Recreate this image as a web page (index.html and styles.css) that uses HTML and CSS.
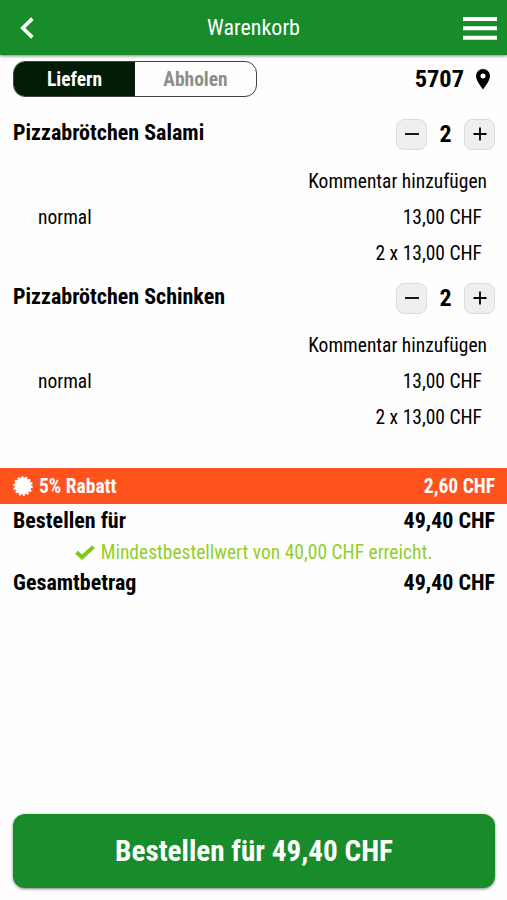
FILE: index.html
```html
<!DOCTYPE html>
<html lang="de">
<head>
  <meta charset="UTF-8">
  <meta name="viewport" content="width=device-width, initial-scale=1">
  <title>Warenkorb</title>
  <link rel="stylesheet" href="styles.css">
</head>
<body>
  <header class="header">
    <button class="icon-btn" aria-label="Zurück">
      <svg width="14" height="22" viewBox="0 0 14 22"><path d="M12.4 1.6 2.8 11l9.6 9.4" fill="none" stroke="#fff" stroke-width="3.7"/></svg>
    </button>
    <h1>Warenkorb</h1>
    <button class="icon-btn" aria-label="Menü">
      <svg width="34" height="23" viewBox="0 0 34 23"><path d="M0 2h34M0 11.3h34M0 20.7h34" stroke="#fff" stroke-width="4"/></svg>
    </button>
  </header>

  <main>
    <div class="delivery">
      <div class="switch">
        <button class="active">Liefern</button>
        <button>Abholen</button>
      </div>
      <div class="zip">
        <span>5707</span>
        <svg width="14" height="21" viewBox="0 0 14 21"><path fill="#000" fill-rule="evenodd" d="M7 0a7 7 0 0 1 7 7.1C14 12 7 20.5 7 20.5S0 12 0 7.1A7 7 0 0 1 7 0Zm0 4.6a2.5 2.5 0 1 0 0 5 2.5 2.5 0 0 0 0-5Z"/></svg>
      </div>
    </div>

    <section class="item">
      <div class="item-head">
        <h2>Pizzabrötchen Salami</h2>
        <div class="counter">
          <button aria-label="weniger"><svg width="14" height="14" viewBox="0 0 14 14"><path d="M0 7h14" stroke="#000" stroke-width="1.8"/></svg></button>
          <span>2</span>
          <button aria-label="mehr"><svg width="14" height="14" viewBox="0 0 14 14"><path d="M0.5 7h13M7 0.5v13" stroke="#000" stroke-width="1.8"/></svg></button>
        </div>
      </div>
      <div class="comment">Kommentar hinzufügen</div>
      <div class="line"><span>normal</span><span>13,00 CHF</span></div>
      <div class="line sum">2 x 13,00 CHF</div>
    </section>

    <section class="item">
      <div class="item-head">
        <h2>Pizzabrötchen Schinken</h2>
        <div class="counter">
          <button aria-label="weniger"><svg width="14" height="14" viewBox="0 0 14 14"><path d="M0 7h14" stroke="#000" stroke-width="1.8"/></svg></button>
          <span>2</span>
          <button aria-label="mehr"><svg width="14" height="14" viewBox="0 0 14 14"><path d="M0.5 7h13M7 0.5v13" stroke="#000" stroke-width="1.8"/></svg></button>
        </div>
      </div>
      <div class="comment">Kommentar hinzufügen</div>
      <div class="line"><span>normal</span><span>13,00 CHF</span></div>
      <div class="line sum">2 x 13,00 CHF</div>
    </section>

    <div class="discount">
      <svg width="20" height="20" viewBox="-10 -10 20 20"><circle r="8.4" fill="#fff"/><circle class="teeth" r="8.6"/></svg>
      <span>5% Rabatt</span>
      <span class="price">2,60 CHF</span>
    </div>

    <div class="total"><span>Bestellen für</span><span>49,40 CHF</span></div>
    <div class="minimum">
      <svg width="20" height="15" viewBox="0 0 20 15"><path d="m1.5 7.2 5.5 5.1L18.5 1.7" fill="none" stroke="#7fc818" stroke-width="4"/></svg>
      <span>Mindestbestellwert von 40,00 CHF erreicht.</span>
    </div>
    <div class="total"><span>Gesamtbetrag</span><span>49,40 CHF</span></div>
  </main>

  <button class="order">Bestellen für 49,40 CHF</button>
</body>
</html>
```
FILE: styles.css
```css
* {
  box-sizing: border-box;
}
body {
  margin: 0;
  height: 900px;
  display: flex;
  flex-direction: column;
  background: #fefefe;
  color: #000;
  font-family: "Roboto Condensed", Roboto, sans-serif;
  font-size: 19.5px;
}
h1, h2 {
  margin: 0;
  font-size: 22px;
}
button {
  padding: 0;
  border: none;
  background: none;
  font: inherit;
  cursor: pointer;
}
svg {
  display: block;
  flex: none;
}

.header {
  display: grid;
  grid-template-columns: 34px 1fr 34px;
  align-items: center;
  height: 55px;
  padding: 1px 10px 0 20px;
  background: #188b2b;
  color: #fff;
  box-shadow: 0 1px 3px rgba(0, 0, 0, 0.5);
}
.header h1 {
  font-weight: 400;
  text-align: center;
  padding: 0 10px 1px 0;
}

main {
  flex: 1;
}
.delivery {
  display: flex;
  justify-content: space-between;
  align-items: center;
  height: 36px;
  margin: 6px 17px 22px 13px;
}
.switch {
  display: flex;
  width: 244px;
  height: 36px;
  border: 1px solid #3c473e;
  border-radius: 12px;
  overflow: hidden;
}
.switch button {
  flex: 1;
  font-weight: 700;
  color: #8b908b;
}
.switch .active {
  background: #031c07;
  color: #fff;
}
.zip {
  display: flex;
  align-items: center;
  gap: 12px;
  font-size: 24.4px;
  font-weight: 700;
}
.zip span {
  padding-bottom: 2px;
}

.item {
  height: 164px;
  padding: 0 12px 0 13px;
}
.item-head {
  display: flex;
  justify-content: space-between;
  height: 44px;
}
.item-head h2 {
  line-height: 27px;
}
.counter {
  display: flex;
  align-items: center;
  height: 30px;
}
.counter button {
  display: flex;
  align-items: center;
  justify-content: center;
  width: 31px;
  height: 31px;
  border: 1px solid #dcdcdc;
  border-radius: 8px;
  background: #efefef;
}
.counter span {
  width: 37px;
  font-size: 24px;
  font-weight: 700;
  text-align: center;
}
.comment {
  padding-right: 8px;
  line-height: 37px;
  text-align: right;
}
.line {
  display: flex;
  justify-content: space-between;
  padding: 0 13px 0 25px;
  line-height: 36px;
}
.sum {
  justify-content: flex-end;
}

.discount {
  display: flex;
  align-items: center;
  height: 36px;
  margin-top: 21px;
  padding: 0 12px 0 13px;
  background: #ff521d;
  color: #fff;
  font-weight: 700;
}
.discount span {
  padding-left: 6px;
}
.discount .price {
  margin-left: auto;
}
.teeth {
  fill: none;
  stroke: #fff;
  stroke-width: 2.4;
  stroke-dasharray: 2.1 1.76;
}
.total {
  display: flex;
  justify-content: space-between;
  padding: 0 12px 0 13px;
  font-size: 22px;
  font-weight: 700;
  line-height: 34px;
}
.minimum {
  display: flex;
  align-items: center;
  justify-content: center;
  gap: 6px;
  height: 28px;
  color: #91cf2c;
}

.order {
  height: 74px;
  margin: 0 12px 12px 13px;
  border-radius: 12px;
  background: #188b2b;
  box-shadow: 0 1px 3px rgba(0, 0, 0, 0.5);
  color: #fff;
  font-size: 29.2px;
  font-weight: 700;
}
```
